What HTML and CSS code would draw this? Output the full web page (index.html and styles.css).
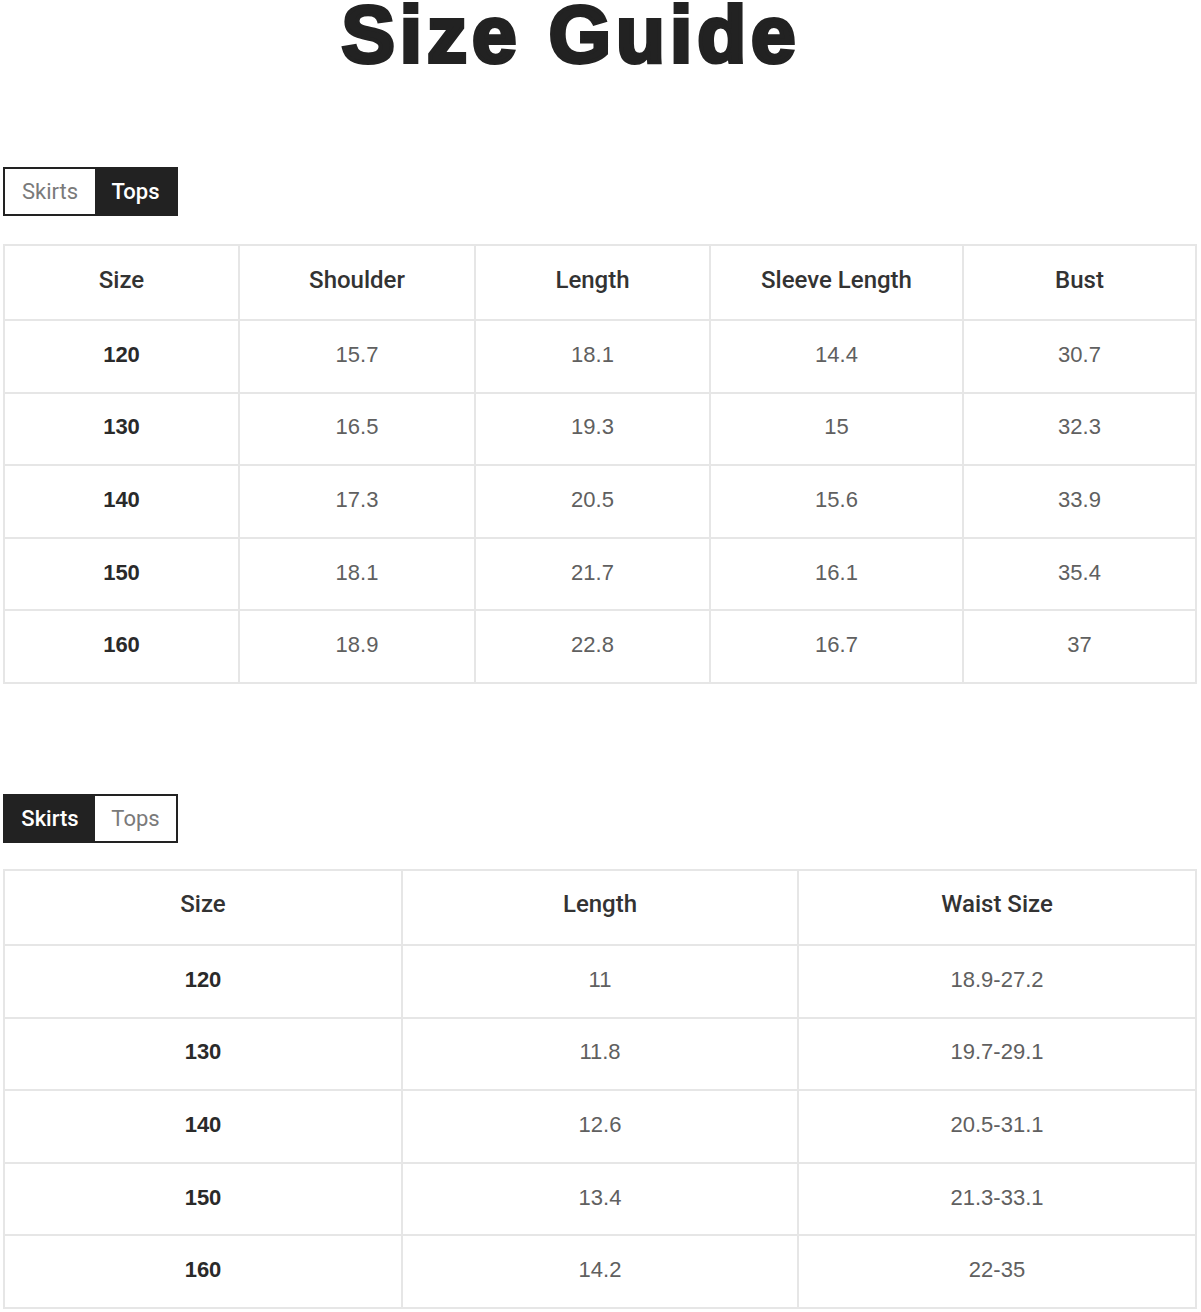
FILE: index.html
```html
<!DOCTYPE html>
<html lang="en">
<head>
<meta charset="utf-8">
<title>Size Guide</title>
<link rel="stylesheet" href="styles.css">
</head>
<body>
<div class="page">
  <h1 class="title">Size Guide</h1>

  <section class="guide guide-tops">
    <div class="tabs">
      <span class="tab tab-skirts">Skirts</span>
      <span class="tab tab-tops active">Tops</span>
    </div>
    <table class="sizes sizes-tops">
      <colgroup>
        <col style="width:235px"><col style="width:236px"><col style="width:235px"><col style="width:253px"><col>
      </colgroup>
      <thead>
        <tr><th>Size</th><th>Shoulder</th><th>Length</th><th>Sleeve Length</th><th>Bust</th></tr>
      </thead>
      <tbody>
        <tr><td class="key">120</td><td>15.7</td><td>18.1</td><td>14.4</td><td>30.7</td></tr>
        <tr><td class="key">130</td><td>16.5</td><td>19.3</td><td>15</td><td>32.3</td></tr>
        <tr><td class="key">140</td><td>17.3</td><td>20.5</td><td>15.6</td><td>33.9</td></tr>
        <tr><td class="key">150</td><td>18.1</td><td>21.7</td><td>16.1</td><td>35.4</td></tr>
        <tr><td class="key">160</td><td>18.9</td><td>22.8</td><td>16.7</td><td>37</td></tr>
      </tbody>
    </table>
  </section>

  <section class="guide guide-skirts">
    <div class="tabs">
      <span class="tab tab-skirts active">Skirts</span>
      <span class="tab tab-tops">Tops</span>
    </div>
    <table class="sizes sizes-skirts">
      <colgroup>
        <col style="width:398px"><col style="width:396px"><col>
      </colgroup>
      <thead>
        <tr><th>Size</th><th>Length</th><th>Waist Size</th></tr>
      </thead>
      <tbody>
        <tr><td class="key">120</td><td>11</td><td>18.9-27.2</td></tr>
        <tr><td class="key">130</td><td>11.8</td><td>19.7-29.1</td></tr>
        <tr><td class="key">140</td><td>12.6</td><td>20.5-31.1</td></tr>
        <tr><td class="key">150</td><td>13.4</td><td>21.3-33.1</td></tr>
        <tr><td class="key">160</td><td>14.2</td><td>22-35</td></tr>
      </tbody>
    </table>
  </section>
</div>
</body>
</html>
```

FILE: styles.css
```css
html, body {
  margin: 0;
  padding: 0;
  background: #ffffff;
}

.page {
  padding: 0 4px 0 3px;
  font-family: "Liberation Sans", Arial, sans-serif;
}

.title {
  margin: -10px 0 87px 0;
  padding-right: 58px;
  text-align: center;
  font-family: "Liberation Sans", Arial, sans-serif;
  font-weight: 700;
  font-size: 80px;
  line-height: 90px;
  letter-spacing: 5px;
  color: #222222;
  -webkit-text-stroke: 4px #222222;
}

.guide-skirts {
  margin-top: 110px;
}

.tabs {
  display: inline-flex;
  border: 2px solid #222222;
  height: 45px;
  margin-bottom: 28px;
  vertical-align: top;
}

.tab {
  display: flex;
  align-items: center;
  justify-content: center;
  font-family: Roboto, "Liberation Sans", sans-serif;
  font-size: 22px;
  color: #7a7a7a;
  background: #ffffff;
}

.tab-skirts {
  width: 90px;
}

.tab-tops {
  width: 81px;
}

.tab.active {
  background: #222222;
  color: #ffffff;
  font-weight: 500;
}

.guide-skirts .tabs {
  margin-bottom: 26px;
}

.sizes {
  width: 100%;
  border-collapse: collapse;
  table-layout: fixed;
}

.sizes th,
.sizes td {
  border: 2px solid #e6e6e6;
  text-align: center;
  vertical-align: middle;
  padding: 0;
  box-sizing: border-box;
}

.sizes th {
  height: 75px;
  padding-bottom: 6px;
  font-family: Roboto, "Liberation Sans", sans-serif;
  font-weight: 500;
  font-size: 24px;
  color: #333333;
}

.sizes td {
  height: 72.6px;
  padding-bottom: 3px;
  font-family: "Liberation Sans", Arial, sans-serif;
  font-size: 22px;
  color: #606060;
}

.sizes td.key {
  font-weight: 700;
  color: #2a2a2a;
}
```
